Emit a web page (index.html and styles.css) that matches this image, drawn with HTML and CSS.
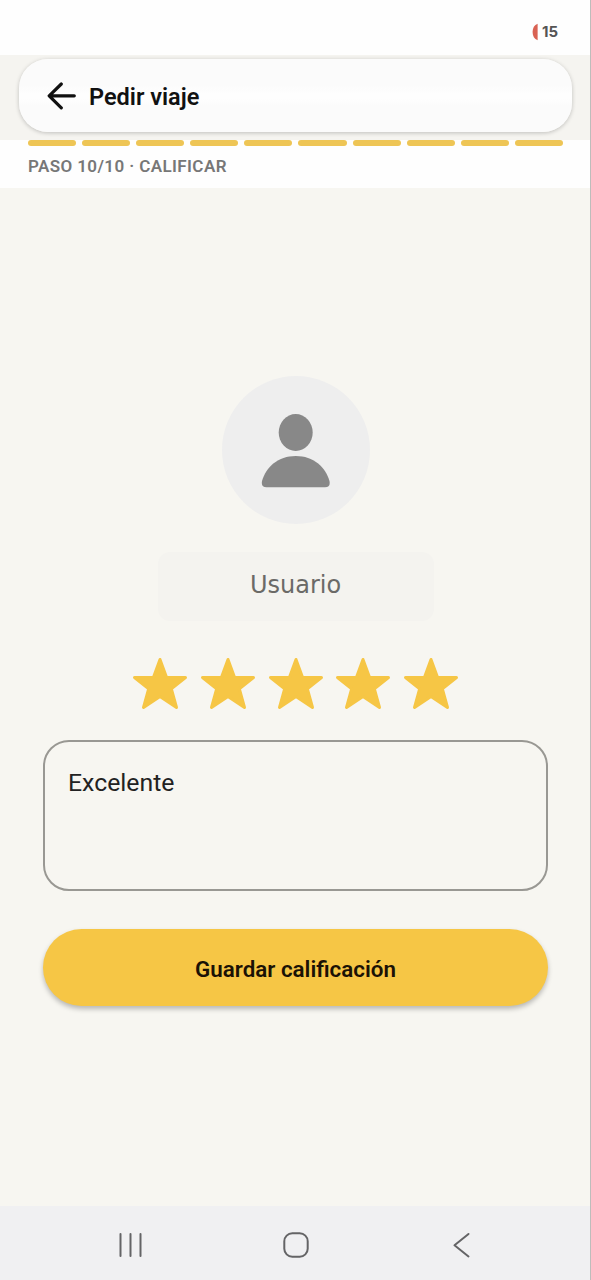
FILE: index.html
```html
<!DOCTYPE html>
<html lang="es">
<head>
<meta charset="utf-8">
<title>Pedir viaje</title>
<link rel="stylesheet" href="styles.css">
</head>
<body>
<div class="screen">
  <div class="status">
    <svg class="battery" width="6" height="18" viewBox="0 0 6 18"><path d="M5.6 .8C2.3 2 .6 5 .6 9s1.700 7 5 8.200z" fill="#d96253"/></svg>
    <span>15</span>
  </div>
  <header class="topbar">
    <div class="topbar-card">
      <svg width="30" height="28" viewBox="0 0 30 28" fill="none" stroke="#111" stroke-width="3.200" stroke-linecap="round" stroke-linejoin="round"><path d="M27.300 13.800H2.200M14.300 2 2.200 13.800 14.300 25.800"/></svg>
      <h1 class="title">Pedir viaje</h1>
    </div>
  </header>
  <section class="progress">
    <div class="steps"><i></i><i></i><i></i><i></i><i></i><i></i><i></i><i></i><i></i><i></i></div>
    <p class="step-label">PASO 10/10 · CALIFICAR</p>
  </section>
  <main class="content">
    <div class="avatar">
      <svg width="70" height="76" viewBox="0 0 70 76" fill="#888"><ellipse cx="34.700" cy="19.500" rx="17" ry="18.500"/><path transform="translate(-.5)" d="M35.300 43C53 43 65 54 69 68Q70.200 74.300 64.500 74.300H6Q.4 74.300 1.500 68C5.500 54 17.500 43 35.300 43Z"/></svg>
    </div>
    <div class="user">Usuario</div>
    <div class="stars">
      <svg viewBox="0 0 56 54"><path d="M28 2.500 34.600 20.500H53.500L39.300 31.700 44.500 50.500 28 39.500 11.500 50.500 16.700 31.700 2.500 20.500H21.400Z"/></svg>
      <svg viewBox="0 0 56 54"><path d="M28 2.500 34.600 20.500H53.500L39.300 31.700 44.500 50.500 28 39.500 11.500 50.500 16.700 31.700 2.500 20.500H21.400Z"/></svg>
      <svg viewBox="0 0 56 54"><path d="M28 2.500 34.600 20.500H53.500L39.300 31.700 44.500 50.500 28 39.500 11.500 50.500 16.700 31.700 2.500 20.500H21.400Z"/></svg>
      <svg viewBox="0 0 56 54"><path d="M28 2.500 34.600 20.500H53.500L39.300 31.700 44.500 50.500 28 39.500 11.500 50.500 16.700 31.700 2.500 20.500H21.400Z"/></svg>
      <svg viewBox="0 0 56 54"><path d="M28 2.500 34.600 20.500H53.500L39.300 31.700 44.500 50.500 28 39.500 11.500 50.500 16.700 31.700 2.500 20.500H21.400Z"/></svg>
    </div>
    <div class="comment">Excelente</div>
    <button class="save">Guardar calificación</button>
  </main>
  <nav class="navbar">
    <svg width="28" height="28" viewBox="0 0 28 28"><path d="M4.500 3V25M14.500 3V25M24.500 3V25"/></svg>
    <svg width="28" height="28" viewBox="0 0 28 28"><rect x="2.300" y="2.300" width="23.400" height="23.400" rx="8"/></svg>
    <svg width="28" height="28" viewBox="0 0 28 28"><path d="M21.500 3 7.500 14.300 21.500 25.500"/></svg>
  </nav>
</div>
</body>
</html>
```
FILE: styles.css
```css
* { box-sizing: border-box; }
body { margin: 0; font-family: Roboto, sans-serif; background: #f7f6f1; }
.screen {
  width: 591px;
  height: 1280px;
  display: flex;
  flex-direction: column;
  border-right: 1px solid #bdbdbb;
  overflow: hidden;
}
.status {
  height: 55px;
  padding: 8px 32px 0 0;
  display: flex;
  justify-content: flex-end;
  align-items: center;
  gap: 4px;
  background: #fefefe;
  color: #555;
  font: 700 15px/18px Inter, sans-serif;
}
.topbar { height: 85px; padding: 4px 18px 0 19px; background: #f5f4f0; }
.topbar-card {
  height: 73px;
  padding: 0 28px;
  display: flex;
  align-items: center;
  gap: 12px;
  border-radius: 29px;
  background: linear-gradient(#fbfbfb 36%, #fefefe 48%, #fefefe 54%, #fbfbfb 64%);
  box-shadow: 0 1px 4px rgba(0, 0, 0, .22);
}
.title { margin: 2px 0 0; font-size: 23.500px; line-height: 28px; font-weight: 600; color: #111; }
.progress { height: 48px; padding: 0 27px 0 28px; background: #fefefe; }
.steps { display: flex; gap: 6px; }
.steps i { flex: 1; height: 6px; border-radius: 3px; background: #eec555; }
.step-label { margin: 10px 0 0; font-size: 17px; line-height: 20px; font-weight: 600; letter-spacing: .4px; color: #777; }
.content {
  height: 1018px;
  padding: 188px 42px 0 43px;
  display: flex;
  flex-direction: column;
  align-items: center;
}
.avatar {
  width: 148px;
  height: 148px;
  padding-top: 1px;
  display: grid;
  place-items: center;
  border-radius: 50%;
  background: #eee;
}
.user {
  width: 276px;
  height: 69px;
  margin-top: 28px;
  border-radius: 12px;
  background: #f4f3ef;
  color: #6b6a67;
  text-align: center;
  font: 24px/67px "DejaVu Sans", sans-serif;
}
.stars { margin-top: 36px; display: flex; gap: 11.800px; }
.stars svg { width: 56px; height: 54px; fill: #f6c645; stroke: #f6c645; stroke-width: 3; stroke-linejoin: round; }
.comment {
  width: 505px;
  height: 151px;
  margin-top: 29px;
  padding: 25px 23px;
  border: 2px solid #999893;
  border-radius: 26px;
  font-size: 24.800px;
  line-height: 31px;
  color: #222;
}
.save {
  width: 505px;
  height: 77px;
  margin-top: 38px;
  padding: 2px 0 0;
  border: 0;
  border-radius: 39px;
  background: #f6c645;
  box-shadow: 0 3px 5px rgba(0, 0, 0, .25);
  color: #1b1205;
  font: 600 22.400px/28px Roboto, sans-serif;
}
.navbar {
  height: 74px;
  padding: 3px 115px 0 116px;
  display: flex;
  justify-content: space-between;
  align-items: center;
  background: #f0f0f2;
}
.navbar svg { fill: none; stroke: #646466; stroke-width: 2; stroke-linecap: round; stroke-linejoin: round; }
```
